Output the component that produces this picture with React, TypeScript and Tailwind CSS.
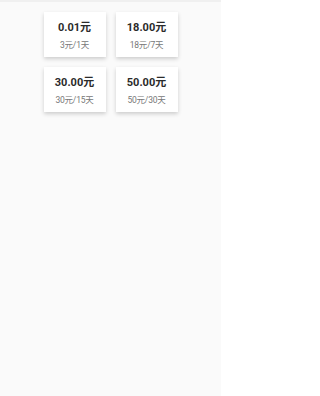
import React from 'react';

const plans = [
  { price: '0.01元', desc: '3元/1天' },
  { price: '18.00元', desc: '18元/7天' },
  { price: '30.00元', desc: '30元/15天' },
  { price: '50.00元', desc: '50元/30天' },
];

const App: React.FC = () => {
  return (
    <div
      className="w-[221px] min-h-screen bg-[#fafafa] border-t-2 border-[#f0f0f0]"
      style={{ fontFamily: 'Roboto, "Noto Sans CJK SC", sans-serif' }}
    >
      <div className="grid grid-cols-[62px_62px] justify-center gap-x-[10px] gap-y-[10px] pt-[10px]">
        {plans.map((p) => (
          <div
            key={p.price}
            className="h-[45px] bg-white flex flex-col items-center pt-[9px] shadow-[0_2px_4px_rgba(0,0,0,0.18)]"
          >
            <div className="text-[11px] leading-[13px] font-bold text-[#2b2b2b]">{p.price}</div>
            <div className="mt-[6px] text-[8.5px] leading-[11px] text-[#777] tracking-[-0.2px]">{p.desc}</div>
          </div>
        ))}
      </div>
    </div>
  );
};

export default App;
